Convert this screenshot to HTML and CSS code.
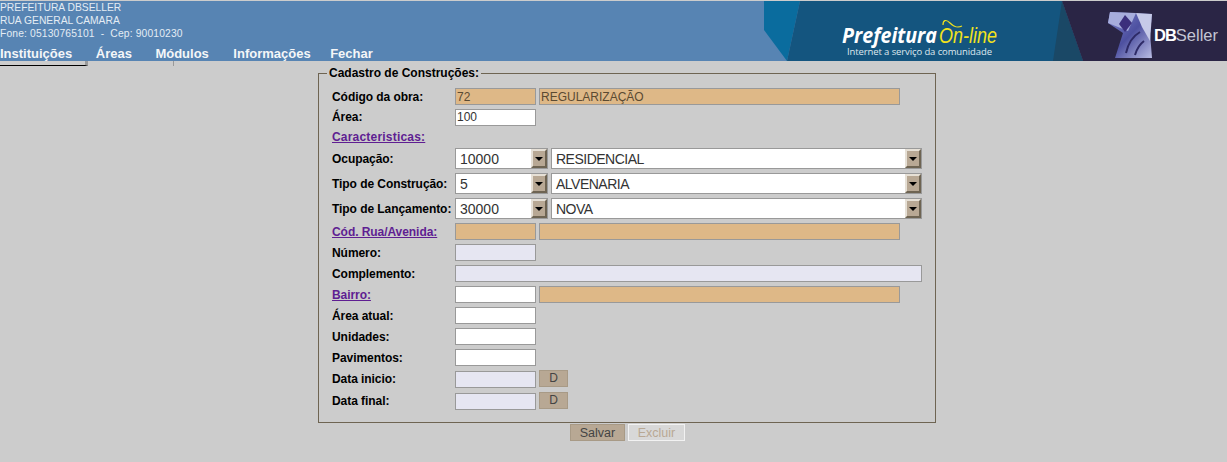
FILE: index.html
```html
<!DOCTYPE html>
<html lang="pt-BR">
<head>
    <meta charset="UTF-8">
    <title>Cadastro de Construções</title>
    <link rel="stylesheet" href="styles.css">
</head>
<body>

<!-- topo -->
<div class="topo">
    <div class="topo-info">
        <div class="dados">
            <div>PREFEITURA DBSELLER</div>
            <div>RUA GENERAL CAMARA</div>
            <div class="fone">Fone: 05130765101 &nbsp;-&nbsp; Cep: 90010230</div>
        </div>
        <div class="menu">
            <a>Instituições</a>
            <a>Áreas</a>
            <a>Módulos</a>
            <a class="menu-fim">Informações</a>
            <a>Fechar</a>
        </div>
    </div>
    <svg class="banner" width="463" height="60" viewBox="0 0 463 60">
        <defs>
            <linearGradient id="cubo" x1="0" y1="0" x2="1" y2="1">
                <stop offset="0" stop-color="#7f86cc"/>
                <stop offset="0.5" stop-color="#4d50a0"/>
                <stop offset="1" stop-color="#b9bde4"/>
            </linearGradient>
        </defs>
        <rect width="463" height="60" fill="#5784b3"/>
        <polygon points="0,0 36,0 23,60 0,29" fill="#0a6c9e"/>
        <polygon points="36,0 298,0 319,60 23,60" fill="#14557f"/>
        <polygon points="298,0 319,60 289,60" fill="#1a4866"/>
        <polygon points="298,0 463,0 463,60 319,60" fill="#2a2545"/>
        <text class="logo-pref" x="78" y="42" textLength="95" lengthAdjust="spacingAndGlyphs">Prefeitura</text>
        <text class="logo-online" x="175" y="42" textLength="58" lengthAdjust="spacingAndGlyphs">On-line</text>
        <path d="M179 24c0-5 3-6 7-2s7 5 12 3" fill="none" stroke="#f2e21c" stroke-width="1.2"/>
        <text class="logo-sub" x="83" y="54" textLength="145">Internet a serviço da comunidade</text>
        <polygon points="346,11 388,13 386,32 388,57 351,57 359,32 344,22" fill="url(#cubo)"/>
        <polygon points="346,11 372,12 364,30 344,22" fill="#a7addc"/>
        <polygon points="372,12 388,13 386,40 378,26" fill="#c6cae8"/>
        <polygon points="361,14 368,22 361,31 355,23" fill="#3b2f7c"/>
        <path d="M362 52c2-9 7-17 14-21M371 54c2-7 5-11 9-14" fill="none" stroke="#2d2a66" stroke-width="2"/>
        <text class="logo-db" x="390" y="40">DB<tspan class="logo-seller">Seller</tspan></text>
    </svg>
</div>

<!-- restos do menu -->
<div class="sobra">
    <div class="sobra-a"></div>
    <div class="sobra-b"></div>
</div>

<form class="form-obra">
    <fieldset class="quadro">
        <legend>Cadastro de Construções:</legend>

        <div class="linha h21">
            <label>Código da obra:</label>
            <input class="campo curto ro" type="text" value="72">
            <input class="campo longo ro" type="text" value="REGULARIZAÇÃO">
        </div>
        <div class="linha h20">
            <label>Área:</label>
            <input class="campo curto" type="text" value="100">
        </div>
        <div class="linha h19">
            <label><a class="ancora carac">Caracteristicas:</a></label>
        </div>
        <div class="linha h25">
            <label>Ocupação:</label>
            <div class="combo curto"><span>10000</span><i class="seta"></i></div>
            <div class="combo grande"><span>RESIDENCIAL</span><i class="seta"></i></div>
        </div>
        <div class="linha h25">
            <label>Tipo de Construção:</label>
            <div class="combo curto"><span>5</span><i class="seta"></i></div>
            <div class="combo grande"><span>ALVENARIA</span><i class="seta"></i></div>
        </div>
        <div class="linha h25">
            <label>Tipo de Lançamento:</label>
            <div class="combo curto"><span>30000</span><i class="seta"></i></div>
            <div class="combo grande"><span>NOVA</span><i class="seta"></i></div>
        </div>
        <div class="linha h21">
            <label><a class="ancora">Cód. Rua/Avenida:</a></label>
            <input class="campo curto ro" type="text">
            <input class="campo longo ro" type="text">
        </div>
        <div class="linha h21">
            <label>Número:</label>
            <input class="campo curto lilas" type="text">
        </div>
        <div class="linha h21">
            <label>Complemento:</label>
            <input class="campo inteiro lilas" type="text">
        </div>
        <div class="linha h21">
            <label><a class="ancora">Bairro:</a></label>
            <input class="campo curto" type="text">
            <input class="campo longo ro" type="text">
        </div>
        <div class="linha h21">
            <label>Área atual:</label>
            <input class="campo curto" type="text">
        </div>
        <div class="linha h21">
            <label>Unidades:</label>
            <input class="campo curto" type="text">
        </div>
        <div class="linha h21">
            <label>Pavimentos:</label>
            <input class="campo curto" type="text">
        </div>
        <div class="linha h22">
            <label>Data inicio:</label>
            <input class="campo curto lilas" type="text">
            <button class="btn-d" type="button">D</button>
        </div>
        <div class="linha h22">
            <label>Data final:</label>
            <input class="campo curto lilas" type="text">
            <button class="btn-d" type="button">D</button>
        </div>
    </fieldset>

    <div class="botoes">
        <button class="btn" type="button">Salvar</button>
        <button class="btn desab" type="button">Excluir</button>
    </div>
</form>

</body>
</html>
```

FILE: styles.css
```css
/* geral */
body {
    font-family: "Liberation Sans", Arial, sans-serif;
    font-size: 12px;
    background: #cccccc;
    margin: 0;
    padding-top: 1px;
    height: 461px;
    overflow: hidden;
}

/* topo */
.topo {
    display: flex;
    justify-content: space-between;
    height: 60px;
    background: #5784b3;
}

.dados {
    color: #e4ecf4;
    font-size: 10.3px;
    line-height: 13px;
    height: 45px;
}

.fone {
    letter-spacing: 0.15px;
}

.menu {
    display: flex;
    gap: 23.5px;
    color: #f4f6f8;
    font-size: 13px;
    font-weight: bold;
    line-height: 15px;
}

.menu .menu-fim {
    margin: 0 -4px 0 1px;
}

.banner {
    display: block;
}

.logo-pref {
    font: italic bold 22px "Open Sans", sans-serif;
    fill: #ffffff;
}

.logo-online {
    font: italic 22px "Liberation Sans", sans-serif;
    fill: #f2e21c;
}

.logo-sub {
    font: 9.5px "Open Sans", sans-serif;
    fill: #dfe8ee;
}

.logo-db {
    font: bold 16.5px "Liberation Sans", sans-serif;
    fill: #ffffff;
    letter-spacing: -1px;
}

.logo-seller {
    font-weight: normal;
    fill: #c4c6d4;
    letter-spacing: 0;
}

/* restos */
.sobra {
    display: flex;
    height: 5px;
}

.sobra-a {
    width: 85px;
    border-bottom: 1px solid #000;
    border-right: 3px solid #9a9a9a;
}

.sobra-b {
    width: 85px;
    border-right: 1px solid #999;
}

/* formulario */
.form-obra {
    width: 618px;
    margin-left: 318px;
}

.quadro {
    margin: 0;
    padding: 6px 13px 11px 13px;
    border: 1px solid #6e6452;
    height: 357px;
    box-sizing: border-box;
}

legend {
    font-weight: bold;
    color: #000;
    padding: 0 2px;
    margin-left: -5px;
    line-height: 14px;
}

.linha {
    display: flex;
    align-items: center;
}

.h19 { height: 19px; }
.h20 { height: 20px; }
.h21 { height: 21px; }
.h22 { height: 22px; }
.h25 { height: 25px; }

label {
    width: 123px;
    flex-shrink: 0;
    font-weight: bold;
    color: #000;
    white-space: nowrap;
    letter-spacing: -0.06px;
}

.ancora {
    color: #5f1e92;
    text-decoration: underline;
}

.carac {
    letter-spacing: 0.2px;
}

.campo {
    box-sizing: border-box;
    height: 17px;
    padding: 0 1px;
    border: 1px solid #999;
    font-family: "Liberation Sans", Arial, sans-serif;
    font-size: 12px;
    color: #333;
    background: #fff;
    margin: 0;
}

.curto { width: 81px; }
.longo { width: 361px; margin-left: 3px; }
.inteiro { width: 467px; }

.ro {
    background: #deb887;
    color: #5a4a32;
}

.lilas {
    background: #e6e6f2;
}

/* select desenhado */
.combo {
    box-sizing: border-box;
    display: flex;
    align-items: center;
    justify-content: space-between;
    height: 21px;
    border: 1px solid #999;
    background: #fff;
    color: #333;
    font-size: 14px;
    padding-left: 4px;
}

.combo.curto {
    width: 93px;
}

.combo.grande {
    width: 371px;
    margin-left: 3px;
    letter-spacing: -0.5px;
}

.seta {
    box-sizing: border-box;
    position: relative;
    width: 16px;
    height: 19px;
    background: #b8a894;
    border-style: solid;
    border-width: 2px;
    border-color: #e6e0d6 #6e6452 #6e6452 #e6e0d6;
}

.seta::after {
    content: "";
    position: absolute;
    top: 6px;
    left: 2px;
    border: 4px solid transparent;
    border-top-color: #000;
    border-bottom-width: 0;
}

.btn-d {
    box-sizing: border-box;
    width: 29px;
    height: 17px;
    margin: 0 0 2px 3px;
    padding: 0;
    border: 1px solid #a89a86;
    background: #b8a894;
    color: #444;
    font: 12px "Liberation Sans", Arial, sans-serif;
}

/* botoes */
.botoes {
    display: flex;
    justify-content: center;
    gap: 3px;
    margin-top: 1px;
    padding-left: 1px;
}

.btn {
    box-sizing: border-box;
    width: 55px;
    height: 17px;
    padding: 0;
    border: 1px solid #a89a86;
    background: #b8a894;
    color: #444;
    font: 12.5px "Liberation Sans", Arial, sans-serif;
}

.desab {
    width: 57px;
    background: #d8d8d8;
    border-color: #f2f2f2;
    color: #b8a894;
}
```
